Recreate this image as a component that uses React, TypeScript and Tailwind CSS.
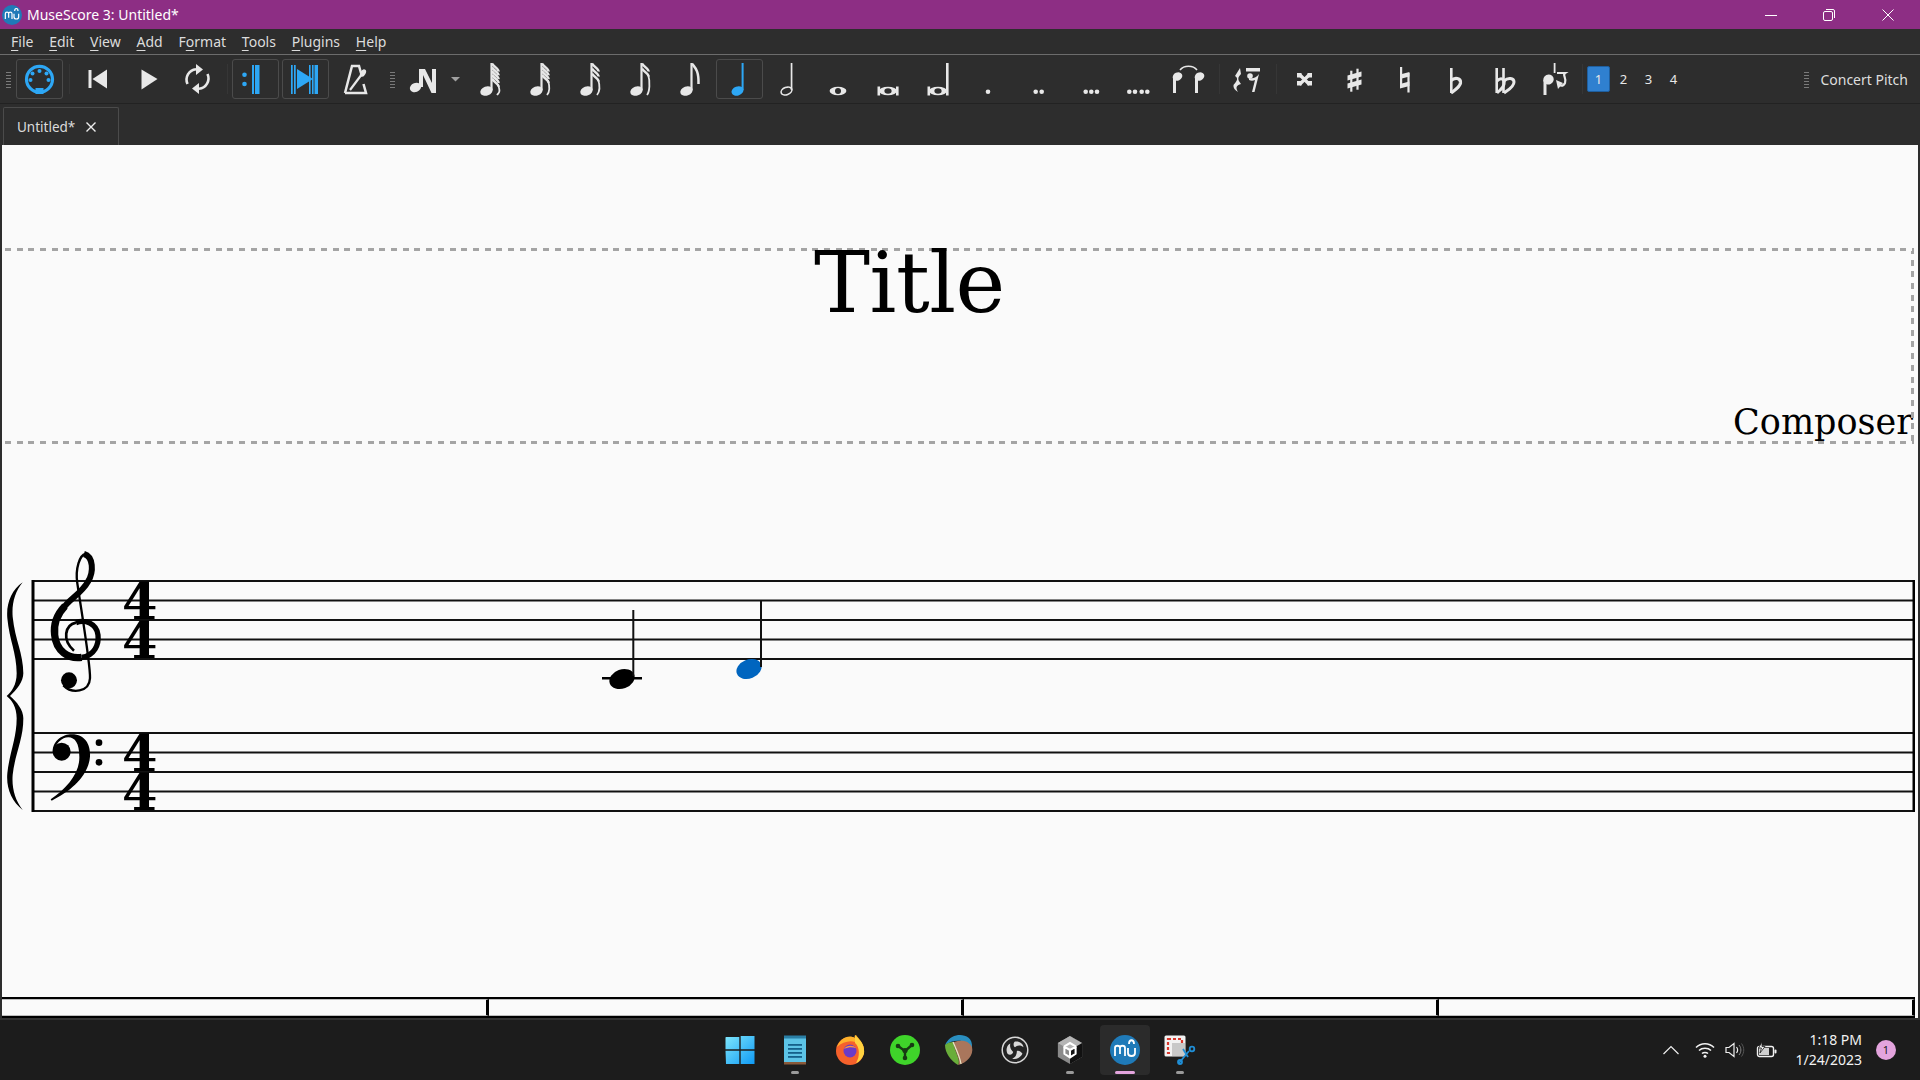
import { ReactNode } from "react"

const ICON = "#e8e8e8"
const BLUE = "#2da7f5"

function Handle() {
  return (
    <div className="h-[18px] w-[5px] bg-[repeating-linear-gradient(0deg,#7a7a7a_0,#7a7a7a_1px,transparent_1px,transparent_3px)]" />
  )
}

function Sep({ className }: { className: string }) {
  return <div className={`h-[30px] w-px bg-[#363636] ${className}`} />
}

// toolbar button, every icon is drawn on the same 47x40 box
function Btn({ children, active }: { children: ReactNode; active?: boolean }) {
  return (
    <div className={`h-10 w-[47px] shrink-0 rounded-[3px] border ${active ? "border-[#4b4b4b]" : "border-transparent"}`}>
      <svg viewBox="0 0 47 40" width="47" height="40" className="-m-px block">
        {children}
      </svg>
    </div>
  )
}

function FlagNote({ flags }: { flags: number }) {
  const rows = Array.from({ length: flags })
  const last = flags === 1
  const step = flags > 3 ? 3.8 : 5
  return (
    <g fill={ICON} stroke="none">
      <ellipse cx="20.5" cy="32" rx="6.4" ry="4.6" transform="rotate(-20 20.5 32)" />
      <rect x="24.4" y="4" width="2.2" height="27" />
      {rows.map((_, i) => (
        <path
          key={i}
          d={`M26,${4.5 + i * step} C28,${8 + i * step} 33,${10 + i * step} 32.5,${last ? 25 : 12.5 + i * step}`}
          fill="none"
          stroke={ICON}
          strokeWidth="2.5"
        />
      ))}
      {!last && (
        <path d={`M32,${10 + (flags - 1) * step} C34.5,${18 + (flags - 1) * step} 33.5,33 31,36`} fill="none" stroke={ICON} strokeWidth="1.8" />
      )}
    </g>
  )
}

function Dots({ xs }: { xs: number[] }) {
  return (
    <g fill={ICON}>
      {xs.map((x) => (
        <circle key={x} cx={x} cy="32.7" r="2.3" />
      ))}
    </g>
  )
}

function Breve({ long }: { long?: boolean }) {
  return (
    <g>
      <ellipse cx="22" cy="32" rx="9" ry="4.2" fill={ICON} />
      <ellipse cx="22" cy="32" rx="3.6" ry="2.8" fill="#2d2d2d" />
      <rect x="11.5" y="27.5" width="2.6" height="9" fill={ICON} />
      <rect x="30" y={long ? 4 : 27.5} width="2.6" height={long ? 32.5 : 9} fill={ICON} />
    </g>
  )
}

function Toolbar() {
  return (
    <div className="flex h-[49px] items-center border-b border-[#222] bg-[#2d2d2d] pl-[6px]">
      <Handle />
      <div className="ml-[5px]">
        <Btn active>
          <circle cx="23.5" cy="20.3" r="13" fill="none" stroke={BLUE} strokeWidth="3.2" />
          <rect x="19.5" y="29" width="8" height="6" fill={BLUE} />
          <g fill={BLUE}>
            <circle cx="23.5" cy="12" r="2" />
            <circle cx="16.5" cy="14.5" r="2" />
            <circle cx="30.5" cy="14.5" r="2" />
            <circle cx="14.5" cy="21" r="2" />
            <circle cx="32.5" cy="21" r="2" />
          </g>
        </Btn>
      </div>
      <Sep className="ml-[6px]" />
      <div className="ml-[4px] flex gap-[3px]">
        <Btn>
          <rect x="14.5" y="11" width="3" height="18" fill={ICON} />
          <path d="M33,10.5 V29.5 L18.5,20 Z" fill={ICON} />
        </Btn>
        <Btn>
          <path d="M17.5,10.5 L33.5,20 L17.5,30.5 Z" fill={ICON} />
        </Btn>
        <Btn>
          <g fill="none" stroke={ICON} strokeWidth="2.6">
            <path d="M13.5,25 A10.5,10.5 0 0 1 22,10.2" />
            <path d="M33.5,15 A10.5,10.5 0 0 1 25,29.8" />
          </g>
          <path d="M22,5 L29,10.5 L22,16 Z M25,24 L18,29.5 L25,35 Z" fill={ICON} />
        </Btn>
      </div>
      <Sep className="ml-[6px]" />
      <div className="ml-[4px] flex gap-[3px]">
        <Btn active>
          <circle cx="12.5" cy="15.7" r="2.3" fill={BLUE} />
          <circle cx="12.5" cy="25" r="2.3" fill={BLUE} />
          <rect x="20" y="6" width="2" height="29" fill={BLUE} />
          <rect x="23" y="6" width="4.5" height="29" fill={BLUE} />
        </Btn>
        <Btn active>
          <rect x="9" y="6" width="1.7" height="29" fill={BLUE} />
          <rect x="12" y="6" width="1.7" height="29" fill={BLUE} />
          <path d="M15,10 L31,20 L15,30 Z" fill={BLUE} />
          <rect x="27" y="6" width="1.6" height="29" fill={BLUE} />
          <rect x="30" y="6" width="1.6" height="29" fill={BLUE} />
          <rect x="32.5" y="6" width="3.5" height="29" fill={BLUE} />
        </Btn>
        <Btn>
          <g fill="none" stroke={ICON} strokeWidth="2.5">
            <path d="M13,34 L20,7 H27 L29,14" />
            <path d="M13,34 H34 L31.5,25" />
          </g>
          <path d="M18,31 L30,15" stroke={ICON} strokeWidth="2.2" />
          <ellipse cx="31" cy="14" rx="2.6" ry="4" fill={ICON} transform="rotate(30 31 14)" />
        </Btn>
      </div>
      <div className="ml-[11px]">
        <Handle />
      </div>
      <div className="ml-[4px]">
        <Btn>
          <ellipse cx="16.5" cy="28.5" rx="5.8" ry="4.5" fill={ICON} transform="rotate(-20 16.5 28.5)" />
          <path d="M20,10 H26 L33,24 V10 H37 V34 H32.5 L24,16 V28 H20 Z" fill={ICON} />
        </Btn>
      </div>
      <svg viewBox="0 0 20 40" width="20" height="40" className="block shrink-0">
        <path d="M5,18 H14 L9.5,22.5 Z" fill="#a0a0a0" />
      </svg>
      <div className="flex gap-[3px]">
        <Btn><FlagNote flags={5} /></Btn>
        <Btn><FlagNote flags={4} /></Btn>
        <Btn><FlagNote flags={3} /></Btn>
        <Btn><FlagNote flags={2} /></Btn>
        <Btn><FlagNote flags={1} /></Btn>
        <Btn active>
          <ellipse cx="21.5" cy="32" rx="6.2" ry="4.4" fill={BLUE} transform="rotate(-20 21.5 32)" />
          <rect x="25.6" y="4" width="2" height="27" fill={BLUE} />
        </Btn>
        <Btn>
          <ellipse cx="20.5" cy="32" rx="5.6" ry="3.6" fill="none" stroke={ICON} strokeWidth="1.6" transform="rotate(-20 20.5 32)" />
          <rect x="24.7" y="4" width="1.7" height="27" fill={ICON} />
        </Btn>
        <Btn>
          <ellipse cx="22" cy="32" rx="8.4" ry="4.2" fill={ICON} />
          <ellipse cx="22" cy="32" rx="3" ry="3" fill="#2d2d2d" />
        </Btn>
        <Btn><Breve /></Btn>
        <Btn><Breve long /></Btn>
        <Btn><Dots xs={[22]} /></Btn>
        <Btn><Dots xs={[19.7, 25.7]} /></Btn>
        <Btn><Dots xs={[19.7, 25.3, 31]} /></Btn>
        <Btn><Dots xs={[13.3, 19, 25.7, 31.3]} /></Btn>
        <Btn>
          <g fill={ICON}>
            <ellipse cx="11.5" cy="17.5" rx="5" ry="4" transform="rotate(-25 11.5 17.5)" />
            <rect x="7" y="18" width="3" height="16" />
            <ellipse cx="33.5" cy="17.5" rx="5" ry="4" transform="rotate(-25 33.5 17.5)" />
            <rect x="29" y="18" width="3" height="16" />
          </g>
          <path d="M14,11 C18,6 27,6 31,11" fill="none" stroke={ICON} strokeWidth="1.6" />
        </Btn>
      </div>
      <Sep className="ml-[6px]" />
      <div className="ml-[4px]">
        <Btn>
          <path d="M16,9 L11,17 C14,19 14,21 9.5,26 C9,29 11,31 14,33 C11,28 13,26 17,25 C14,21 13,19 17,15 Z" fill={ICON} />
          <rect x="22" y="9" width="14" height="3.5" fill={ICON} />
          <circle cx="26" cy="17" r="2.8" fill={ICON} />
          <path d="M25,19 C29,20 32,19 35,15 L30.5,33 H28 L31,21 C29,22 27,22 25,21 Z" fill={ICON} />
        </Btn>
      </div>
      <Sep className="ml-[5px]" />
      <div className="ml-[4px] flex gap-[3px]">
        <Btn>
          <g stroke={ICON} strokeWidth="3.2">
            <path d="M18.5,15.5 L28.5,25.5 M28.5,15.5 L18.5,25.5" />
          </g>
          <g fill={ICON}>
            <rect x="16" y="14" width="4.5" height="4.5" />
            <rect x="26.5" y="14" width="4.5" height="4.5" />
            <rect x="16" y="22" width="4.5" height="4.5" />
            <rect x="26.5" y="22" width="4.5" height="4.5" />
          </g>
        </Btn>
        <Btn>
          <g fill={ICON}>
            <rect x="19.2" y="11.7" width="2.2" height="21" />
            <rect x="25.4" y="9.7" width="2.2" height="21" />
            <path d="M16.5,16.5 L30.5,12.5 V17.5 L16.5,21.5 Z M16.5,24.5 L30.5,20.5 V25.5 L16.5,29.5 Z" />
          </g>
        </Btn>
        <Btn>
          <g fill={ICON}>
            <rect x="19" y="8" width="2.2" height="19" />
            <rect x="26.4" y="14" width="2.2" height="19.5" />
            <path d="M19,15.5 L28.4,13 V17.5 L19,20 Z M19,25 L28.4,22.5 V27 L19,29.5 Z" />
          </g>
        </Btn>
        <Btn>
          <rect x="19" y="9" width="2.6" height="25" fill={ICON} />
          <path d="M20,21.5 C24,18 30,19 29.5,24 C29,28 24,31 20,34" fill="none" stroke={ICON} strokeWidth="3.2" />
        </Btn>
        <Btn>
          <g fill="none" stroke={ICON}>
            <path d="M15.7,9 V34 M22.5,9 V34" strokeWidth="2.6" />
            <path d="M16,22 C20,18 24,20 23,25 C22.5,29 19,31 16,34" strokeWidth="3" />
            <path d="M23,22 C27,18 33,19 33,23 C33,28 27,31 23,34" strokeWidth="3" />
          </g>
        </Btn>
        <Btn>
          <g fill={ICON}>
            <rect x="22.7" y="4" width="1.8" height="10" />
            <ellipse cx="17.5" cy="20.5" rx="5.3" ry="5" transform="rotate(-25 17.5 20.5)" />
            <rect x="12.5" y="21" width="3" height="15" />
          </g>
          <g fill="none" stroke={ICON} strokeWidth="2.2">
            <path d="M26,14 H34 C31,16 36,19 34,24 C32,28 29,27 27,25" />
          </g>
          <path d="M25,21 L32,24 L27,30 Z" fill={ICON} />
        </Btn>
      </div>
      <Sep className="ml-[4px]" />
      <div className="ml-[4px] flex gap-[2px] font-['Noto_Sans',sans-serif] text-[13px] text-[#e8e8e8]">
        <div className="flex h-[26px] w-[23px] items-center justify-center rounded-[2px] border border-[#1f5f9f] bg-[#2f80d0] pt-px">1</div>
        <div className="flex h-[26px] w-[23px] items-center justify-center pt-[2px]">2</div>
        <div className="flex h-[26px] w-[23px] items-center justify-center pt-[2px]">3</div>
        <div className="flex h-[26px] w-[23px] items-center justify-center pt-[2px]">4</div>
      </div>
      <div className="ml-auto flex items-center gap-[11px] pr-[12px]">
        <Handle />
        <span className="pt-px font-['Noto_Sans',sans-serif] text-[14px] text-[#dedede]">Concert Pitch</span>
      </div>
    </div>
  )
}

function MenuItem({ mark, rest, before }: { mark: string; rest: string; before?: string }) {
  return (
    <span>
      {before}
      <span className="underline underline-offset-[3px]">{mark}</span>
      {rest}
    </span>
  )
}

function MuseLogo({ size }: { size: number }) {
  return (
    <svg viewBox="0 0 30 30" width={size} height={size} className="block">
      <circle cx="15" cy="15" r="15" fill="#1f7ab8" />
      <g fill="none" stroke="#fff" strokeWidth="1.8">
        <path d="M5,21 V13 C5,10 10,10 10,13 V19 M10,13 C10,10 15,10 15,13 V21" />
        <path d="M18,13 V18 C18,22 25,22 25,18 V13" />
        <path d="M19,9 C19,4 24,4 24,9" />
      </g>
    </svg>
  )
}

function Brace() {
  return (
    <path
      d="M68,127 C35,150 18,190 22,235 C28,300 50,340 50,400 C50,435 35,455 20,468 C35,480 50,500 50,535 C50,595 28,640 22,700 C18,745 35,785 68,810 C45,780 35,745 38,705 C45,640 70,600 70,535 C70,510 50,485 30,468 C50,450 70,425 70,400 C70,340 45,300 38,230 C35,190 45,155 68,127 Z"
      fill="#000"
    />
  )
}

function TrebleClef() {
  return (
    <g fill="none" stroke="#000">
      <path d="M190,436 C215,462 268,458 270,415 C272,380 250,250 232,130 C225,85 240,45 256,42" strokeWidth="7" />
      <path d="M252,42 C280,50 282,95 264,125 C245,160 205,180 190,205" strokeWidth="18" />
      <path d="M195,198 C172,222 160,252 164,285 C168,332 205,358 245,352" strokeWidth="22" />
      <path d="M245,352 C285,346 297,312 294,285 C290,250 255,238 228,248" strokeWidth="16" />
      <path d="M228,248 C195,255 185,300 222,332" strokeWidth="8" />
      <circle cx="207" cy="421" r="24" fill="#000" stroke="none" />
    </g>
  )
}

function BassClef() {
  return (
    <g fill="#000">
      <circle cx="185" cy="635" r="27" />
      <path d="M158,635 C158,600 190,583 215,583 C260,583 272,620 270,650 C265,710 210,755 155,782 L152,778 C200,745 240,700 238,650 C238,610 225,592 205,592 C185,592 170,610 165,625 Z" />
      <circle cx="297" cy="608" r="10" />
      <circle cx="297" cy="667" r="10" />
    </g>
  )
}

// numerator and denominator stacked in one text node, laid over the staff
function TimeSig({ className }: { className: string }) {
  return (
    <div className={`absolute left-[120px] w-[34px] whitespace-pre-line text-center font-['DejaVu_Serif',serif] text-[51px] font-bold leading-[39px] text-black ${className}`}>
      {"4\n4"}
    </div>
  )
}

function Score() {
  const treble = [581, 600.5, 620, 639.5, 659]
  const bass = [733, 752.5, 772, 791.5, 811]
  return (
    <div className="relative mt-[96px] h-[290px] w-[1916px] shrink-0">
      <svg viewBox="2 540 1916 290" width="1916" height="290" className="block">
        {[...treble, ...bass].map((y) => (
          <line key={y} x1="32" x2="1914" y1={y} y2={y} stroke="#111" strokeWidth="2" />
        ))}
        <rect x="31.5" y="580" width="3" height="232" fill="#000" />
        <rect x="1912.5" y="580" width="2.5" height="232" fill="#000" />
        <g transform="translate(0 540) scale(0.3333)">
          <Brace />
          <TrebleClef />
          <BassClef />
        </g>
        <ellipse cx="622" cy="679" rx="13" ry="9.5" fill="#000" transform="rotate(-20 622 679)" />
        <rect x="602" y="677" width="40" height="2.5" fill="#000" />
        <rect x="632.3" y="610" width="2" height="66" fill="#111" />
        <ellipse cx="749" cy="669" rx="13" ry="9.5" fill="#0065bf" transform="rotate(-22 749 669)" />
        <rect x="760" y="600" width="2" height="67" fill="#111" />
      </svg>
      <TimeSig className="top-[42px]" />
      <TimeSig className="top-[194px]" />
    </div>
  )
}

function RulerCell({ w }: { w: string }) {
  return <div className={`h-full border-y border-r-[3px] border-y-[#bdbdbd] border-r-black ${w}`} />
}

function TaskSlot({ children, pill, on }: { children: ReactNode; pill?: boolean; on?: boolean }) {
  return (
    <div className="relative flex h-[50px] w-[55px] items-center justify-center">
      {on && <div className="absolute inset-y-0 left-[2.5px] w-[50px] rounded-[4px] bg-[#2b2b2b]" />}
      <div className="relative">{children}</div>
      {pill && <div className="absolute bottom-[1px] left-1/2 h-[3px] w-2 -translate-x-1/2 rounded-full bg-[#9a9a9a]" />}
      {on && <div className="absolute bottom-[1px] left-1/2 h-[3px] w-5 -translate-x-1/2 rounded-full bg-[#e3a4dd]" />}
    </div>
  )
}

function TaskIcons() {
  return (
    <div className="flex">
      <TaskSlot>
        <svg viewBox="0 0 30 30" width="30" height="30" className="block">
          <defs>
            <linearGradient id="winA" x1="0" y1="0" x2="1" y2="1">
              <stop offset="0" stopColor="#7fe6fb" />
              <stop offset="1" stopColor="#0f9af5" />
            </linearGradient>
          </defs>
          <path d="M1,2 H14.3 V14.3 H0.5 V2.5 Z M15.7,1 H29.5 V14.3 H15.7 Z M0.5,15.7 H14.3 V29 H1 Z M15.7,15.7 H29.5 V29 H15.7 Z" fill="url(#winA)" />
        </svg>
      </TaskSlot>
      <TaskSlot pill>
        <svg viewBox="0 0 24 30" width="24" height="30" className="block">
          <rect x="1" y="1" width="22" height="28" rx="1.5" fill="#5cc3e6" />
          <rect x="1" y="27" width="22" height="2.5" fill="#8a5a3a" />
          <rect x="1" y="0.5" width="22" height="3" fill="#2a7fa5" />
          <g fill="#14608a">
            <rect x="5" y="9" width="14" height="1.8" />
            <rect x="5" y="13" width="14" height="1.8" />
            <rect x="5" y="17" width="14" height="1.8" />
            <rect x="5" y="21" width="14" height="1.8" />
          </g>
        </svg>
      </TaskSlot>
      <TaskSlot>
        <svg viewBox="0 0 30 30" width="30" height="30" className="block">
          <circle cx="15" cy="16" r="14" fill="#f5612b" />
          <path d="M2,12 C5,3 14,-1 20,3 C19,1 20,0 21,0 C24,4 30,9 29,18 C27,12 24,8 20,7 C15,5 7,7 2,12 Z" fill="#ffb12b" />
          <path d="M20,1 C26,5 30,11 29,19 C27,24 24,27 21,28 C25,22 25,12 20,8 Z" fill="#ffd23f" />
          <circle cx="15" cy="16" r="6.5" fill="#6a3bc8" />
          <path d="M9,14 C12,10 18,10 21,13 C17,12 13,12 9,14 Z" fill="#ff9a3a" />
        </svg>
      </TaskSlot>
      <TaskSlot>
        <svg viewBox="0 0 30 30" width="30" height="30" className="block">
          <circle cx="15" cy="15" r="15" fill="#3fd42a" />
          <g stroke="#173b13" strokeWidth="2.4">
            <path d="M15,16 L8,11 M15,16 L22,10 M15,16 L15,23" />
          </g>
          <g fill="#173b13">
            <circle cx="8" cy="11" r="2.3" />
            <circle cx="22" cy="10" r="2.3" />
            <circle cx="15" cy="23" r="2.3" />
            <circle cx="15" cy="15.5" r="2.6" />
          </g>
        </svg>
      </TaskSlot>
      <TaskSlot>
        <svg viewBox="0 0 30 30" width="30" height="30" className="block">
          <path d="M0,10 C4,2 10,0 15,0 C21,0 28,3 27,13 C22,5 10,3 0,10 Z" fill="#2a8fc0" />
          <path d="M0,10 C0,18 6,26 13,30 C17,26 8,14 9,7 C5,7 2,8 0,10 Z" fill="#69ad3a" />
          <path d="M9,7 C8,14 17,26 13,30 C22,28 29,20 27,12 C23,5 16,5 9,7 Z" fill="#a9765c" />
          <path d="M8,7 C11,14 15,22 16,29" fill="none" stroke="#e8e6c8" strokeWidth="1.2" />
        </svg>
      </TaskSlot>
      <TaskSlot>
        <svg viewBox="0 0 30 30" width="28" height="28" className="block">
          <circle cx="15" cy="15" r="13.7" fill="#232323" stroke="#d8d8d8" strokeWidth="1.6" />
          <g fill="#d8d8d8">
            <path d="M15,6 C19,5 24,8 24,12 C21,9 17,10 15,12 C13,11 13,7 15,6 Z" />
            <path d="M23,19 C21,23 16,26 12,24 C16,23 17,19 17,16 C19,15 22,17 23,19 Z" />
            <path d="M7,19 C5,15 6,10 10,8 C9,12 11,15 13,17 C13,20 9,21 7,19 Z" />
          </g>
        </svg>
      </TaskSlot>
      <TaskSlot pill>
        <svg viewBox="0 0 30 30" width="28" height="30" className="block">
          <path d="M15,0 L28,7.5 V22.5 L15,30 L2,22.5 V7.5 Z" fill="#8a8a8a" />
          <path d="M15,0 L28,7.5 V22.5 L15,30 Z" fill="#111" />
          <path d="M2,7.5 L15,0 L28,7.5 L15,15 Z" fill="#b5b5b5" />
          <g stroke="#fff" strokeWidth="2.2" fill="none">
            <path d="M15,15 V23 M15,15 L8,11 M15,15 L22,11 M9,11 L15,7.5 L21,11 M9,11 V19 L15,23 L21,19 V11" />
          </g>
        </svg>
      </TaskSlot>
      <TaskSlot on>
        <MuseLogo size={30} />
      </TaskSlot>
      <TaskSlot pill>
        <svg viewBox="0 0 32 30" width="32" height="30" className="block">
          <rect x="0.5" y="0.5" width="21" height="21" rx="1.5" fill="#f2f2f2" />
          <rect x="4" y="4" width="14" height="14" fill="none" stroke="#d8382d" strokeWidth="2.2" strokeDasharray="3 2" />
          <rect x="8" y="8" width="13" height="13" fill="#c8c8c8" />
          <g fill="none" stroke="#1f8ed6" strokeWidth="1.8">
            <path d="M15,28 L25,16 M19,14 L24,22" />
            <circle cx="28" cy="14" r="2.3" />
            <circle cx="16" cy="27" r="2" />
          </g>
        </svg>
      </TaskSlot>
    </div>
  )
}

function Tray() {
  return (
    <div className="flex flex-1 justify-end">
      <div className="flex items-center pr-[24px] text-[#f2f2f2]">
        <svg viewBox="0 0 16 10" width="16" height="10" className="mr-[16px] block">
          <path d="M0.5,9 L8,1.5 L15.5,9" fill="none" stroke="#eee" strokeWidth="1.2" />
        </svg>
        <svg viewBox="0 0 20 16" width="20" height="16" className="mr-[10px] block">
          <g fill="none" stroke="#f2f2f2" strokeWidth="1.5">
            <path d="M1,5.5 C6,0.5 14,0.5 19,5.5" />
            <path d="M4,8.5 C7,5.5 13,5.5 16,8.5" />
            <path d="M7,11.5 C8.5,10 11.5,10 13,11.5" />
          </g>
          <circle cx="10" cy="14.3" r="1.5" fill="#f2f2f2" />
        </svg>
        <svg viewBox="0 0 20 16" width="20" height="16" className="mr-[11px] block">
          <path d="M1,5.5 H4 L9,1.5 V14.5 L4,10.5 H1 Z" fill="none" stroke="#eee" strokeWidth="1.2" />
          <path d="M11.5,5 C13,7 13,9 11.5,11" fill="none" stroke="#eee" strokeWidth="1.2" />
          <path d="M14,3 C16.5,6 16.5,10 14,13" fill="none" stroke="#888" strokeWidth="1" />
          <path d="M16.5,1.5 C19.5,5.5 19.5,10.5 16.5,14.5" fill="none" stroke="#555" strokeWidth="1" />
        </svg>
        <svg viewBox="0 0 22 16" width="22" height="16" className="mr-[18px] block">
          <rect x="1.5" y="4.5" width="16" height="10" rx="2" fill="none" stroke="#f2f2f2" strokeWidth="1.4" />
          <rect x="3" y="6" width="10" height="7" fill="#cfcfcf" />
          <rect x="18.5" y="7.5" width="2" height="4" rx="1" fill="#f2f2f2" />
          <path d="M6,0 L2.5,6 H5.5 L4,11 L9,4.5 H6 Z" fill="#f2f2f2" stroke="#1c1c1c" strokeWidth="0.8" />
        </svg>
        <div className="flex flex-col items-end font-['Noto_Sans',sans-serif] text-[14px] leading-[20px]">
          <span>1:18 PM</span>
          <span>1/24/2023</span>
        </div>
        <div className="ml-[14px] flex size-5 items-center justify-center rounded-full bg-[#e3a4dd] font-['Noto_Sans',sans-serif] text-[11px] text-[#1c1c1c]">
          1
        </div>
      </div>
    </div>
  )
}

export default function App() {
  return (
    <div className="flex h-[1080px] w-[1920px] flex-col overflow-hidden bg-[#2d2d2d] font-['Noto_Sans',sans-serif]">
      {/* title bar */}
      <div className="flex h-[29px] shrink-0 items-center bg-[#8d2e84] pl-[2px] text-[14px] text-white">
        <MuseLogo size={20} />
        <span className="ml-[5px]">MuseScore 3: Untitled*</span>
        <div className="ml-auto flex items-center">
          <svg viewBox="0 0 12 12" width="12" height="12" className="mr-[46px] block">
            <path d="M0,6.5 H12" stroke="#fff" strokeWidth="1" />
          </svg>
          <svg viewBox="0 0 12 12" width="12" height="12" className="mr-[47px] block">
            <rect x="0.5" y="2.5" width="9" height="9" rx="1.5" fill="none" stroke="#fff" />
            <path d="M3,0.5 H10 A1.5,1.5 0 0 1 11.5,2 V9" fill="none" stroke="#fff" />
          </svg>
          <svg viewBox="0 0 12 12" width="12" height="12" className="mr-[26px] block">
            <path d="M0.5,0.5 L11.5,11.5 M11.5,0.5 L0.5,11.5" stroke="#fff" strokeWidth="1" />
          </svg>
        </div>
      </div>

      {/* menu */}
      <div className="flex h-[26px] shrink-0 items-center gap-[15.8px] border-b border-[#6c6c6c] bg-[#2d2d2d] pl-[11px] text-[14px] text-[#dcdcdc]">
        <MenuItem mark="F" rest="ile" />
        <MenuItem mark="E" rest="dit" />
        <MenuItem mark="V" rest="iew" />
        <MenuItem mark="A" rest="dd" />
        <MenuItem before="F" mark="o" rest="rmat" />
        <MenuItem mark="T" rest="ools" />
        <MenuItem mark="P" rest="lugins" />
        <MenuItem mark="H" rest="elp" />
      </div>

      <Toolbar />

      {/* tabs */}
      <div className="flex h-[41px] shrink-0 items-end bg-[#2d2d2d] pl-[3px]">
        <div className="flex h-[38px] w-[116px] items-center rounded-t-[2px] border border-b-0 border-[#4b4b4b] pl-[13px] text-[13.5px] text-[#dcdcdc]">
          <span className="pt-px">Untitled*</span>
          <svg viewBox="0 0 10 10" width="10" height="10" className="ml-[11px] block">
            <path d="M0.5,0.5 L9.5,9.5 M9.5,0.5 L0.5,9.5" stroke="#eee" strokeWidth="1.4" />
          </svg>
        </div>
      </div>

      {/* score page */}
      <div className="mx-[2px] flex min-h-0 flex-1 flex-col bg-[#fafafa]">
        <div className="ml-[3px] mt-[103px] w-[1909px] shrink-0 font-['DejaVu_Serif',serif] text-black">
          <div className="h-[3px] bg-[repeating-linear-gradient(90deg,#a4a4a4_0,#a4a4a4_6px,transparent_6px,transparent_11.7px)]" />
          <div className="flex h-[190px]">
            <div className="flex min-w-0 flex-1 flex-col">
              <div className="-mt-[10px] pl-[809px] text-[84px] leading-none tracking-[-0.5px]">Title</div>
              <div className="-mr-[2px] mb-px mt-auto text-right text-[35px] leading-none">Composer</div>
            </div>
            <div className="w-[3px] bg-[repeating-linear-gradient(0deg,#a4a4a4_0,#a4a4a4_6px,transparent_6px,transparent_11.7px)]" />
          </div>
          <div className="h-[3px] bg-[repeating-linear-gradient(90deg,#a4a4a4_0,#a4a4a4_6px,transparent_6px,transparent_11.7px)]" />
        </div>
        <Score />
        <div className="mt-auto flex h-[21px] w-[1913px] shrink-0 border-y-2 border-black">
          <RulerCell w="w-[487px]" />
          <RulerCell w="w-[475px]" />
          <RulerCell w="w-[475px]" />
          <RulerCell w="w-[476px]" />
        </div>
      </div>

      {/* taskbar */}
      <div className="flex h-[62px] shrink-0 items-center border-t-2 border-[#333] bg-[#1c1c1c]">
        <div className="flex-1" />
        <TaskIcons />
        <Tray />
      </div>
    </div>
  )
}
